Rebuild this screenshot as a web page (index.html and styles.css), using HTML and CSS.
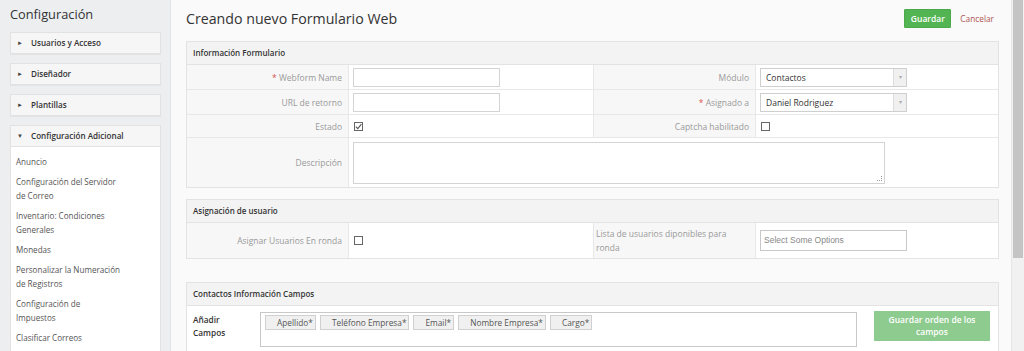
FILE: index.html
```html
<!DOCTYPE html>
<html lang="es">
<head>
    <meta charset="UTF-8">
    <title>Creando nuevo Formulario Web</title>
    <link rel="stylesheet" href="styles.css">
</head>
<body>
    <aside class="sidebar">
        <h1 class="side-title">Configuración</h1>
        <div class="acc-head"><span class="caret">&#9658;</span>Usuarios y Acceso</div>
        <div class="acc-head"><span class="caret">&#9658;</span>Diseñador</div>
        <div class="acc-head"><span class="caret">&#9658;</span>Plantillas</div>
        <div class="acc-head open"><span class="caret">&#9660;</span>Configuración Adicional</div>
        <ul class="acc-list">
            <li>Anuncio</li>
            <li>Configuración del Servidor de Correo</li>
            <li>Inventario: Condiciones Generales</li>
            <li>Monedas</li>
            <li>Personalizar la Numeración de Registros</li>
            <li>Configuración de Impuestos</li>
            <li>Clasificar Correos</li>
        </ul>
    </aside>

    <main class="main">
        <div class="page-head">
            <h2 class="page-title">Creando nuevo Formulario Web</h2>
            <div class="actions">
                <button class="btn-save">Guardar</button>
                <a class="cancel">Cancelar</a>
            </div>
        </div>

        <section class="block">
            <div class="block-head">Información Formulario</div>
            <div class="grid">
                <div class="lbl h25"><span class="req">*</span>&nbsp;Webform Name</div>
                <div class="val h25"><div class="input"></div></div>
                <div class="lbl h25">Módulo</div>
                <div class="val h25"><div class="select"><span>Contactos</span><i class="arrow">&#9662;</i></div></div>

                <div class="lbl h25">URL de retorno</div>
                <div class="val h25"><div class="input"></div></div>
                <div class="lbl h25"><span class="req">*</span>&nbsp;Asignado a</div>
                <div class="val h25"><div class="select"><span>Daniel Rodriguez</span><i class="arrow">&#9662;</i></div></div>

                <div class="lbl h23">Estado</div>
                <div class="val h23">
                    <span class="check">
                        <svg width="9" height="9" viewBox="0 0 9 9"><path d="M1.8 4.6 L3.8 6.6 L7.4 2.2" fill="none" stroke="#555" stroke-width="1.1"/></svg>
                    </span>
                </div>
                <div class="lbl h23">Captcha habilitado</div>
                <div class="val h23"><span class="check"></span></div>

                <div class="lbl h49 last">Descripción</div>
                <div class="val h49 wide last"><div class="textarea"><i class="grip"></i></div></div>
            </div>
        </section>

        <section class="block block-user">
            <div class="block-head">Asignación de usuario</div>
            <div class="grid">
                <div class="lbl h35 last">Asignar Usuarios En ronda</div>
                <div class="val h35 last"><span class="check"></span></div>
                <div class="lbl lbl-left h35 last">Lista de usuarios diponibles para ronda</div>
                <div class="val h35 last"><div class="input chosen">Select Some Options</div></div>
            </div>
        </section>

        <section class="block block-fields">
            <div class="block-head">Contactos Información Campos</div>
            <div class="fields-row">
                <div class="fields-label">Añadir Campos</div>
                <div class="fields-box">
                    <span class="chip">Apellido*</span>
                    <span class="chip">Teléfono Empresa*</span>
                    <span class="chip">Email*</span>
                    <span class="chip">Nombre Empresa*</span>
                    <span class="chip">Cargo*</span>
                </div>
                <button class="btn-order">Guardar orden de los campos</button>
            </div>
        </section>
    </main>

    <div class="scrollbar"><div class="thumb"></div></div>
</body>
</html>
```

FILE: styles.css
```css
body {
    margin: 0;
    display: flex;
    height: 351px;
    overflow: hidden;
    font-family: 'Open Sans', sans-serif;
    font-size: 8.5px;
    color: #333;
    background-color: #fafafa;
}
.sidebar {
    width: 151px;
    flex: none;
    padding: 0 9px 0 10px;
    background-color: #eceef0;
    border-right: 1px solid #e2e4e6;
}
.side-title {
    margin: 0;
    height: 32px;
    line-height: 28px;
    font-size: 12.8px;
    font-weight: 400;
    color: #333;
}
.acc-head {
    height: 20px;
    line-height: 20px;
    margin-bottom: 9px;
    background-color: #f6f6f6;
    border: 1px solid #e2e2e2;
    box-shadow: 0 1px 1px rgba(0, 0, 0, 0.04);
    font-weight: 600;
    font-size: 8.1px;
    color: #333;
}
.acc-head.open {
    margin-bottom: 0;
}
.caret {
    display: inline-block;
    width: 14px;
    padding-left: 6px;
    font-size: 6px;
    color: #444;
    vertical-align: top;
}
.acc-list {
    list-style: none;
    margin: 0;
    padding: 5px 0 0;
    height: 300px;
    background: #fff;
    border-left: 1px solid #e2e2e2;
    border-right: 1px solid #e2e2e2;
}
.acc-list li {
    padding: 3px 0 3px 5px;
    width: 105px;
    line-height: 14px;
    font-size: 8.1px;
    color: #555;
}
.main {
    flex: 1;
    padding: 0 0 0 15px;
    min-width: 0;
}
.page-head {
    display: flex;
    align-items: center;
    justify-content: space-between;
    height: 37px;
    padding-right: 17px;
    margin-bottom: 4px;
}
.page-title {
    margin: 0;
    font-size: 14.2px;
    font-weight: 400;
    color: #333;
}
.actions {
    display: flex;
    align-items: center;
    gap: 9px;
}
.btn-save {
    height: 19px;
    width: 47px;
    padding: 0;
    border: 1px solid #4aa94a;
    background-color: #52b452;
    color: #fff;
    font-family: 'Open Sans', sans-serif;
    font-size: 8.5px;
    font-weight: 600;
    border-radius: 1px;
}
.cancel {
    color: #b05454;
    font-size: 8.3px;
}
.block {
    width: 811px;
    border: 1px solid #e3e3e3;
    background: #fff;
    margin-bottom: 11px;
}
.block-user {
    margin-bottom: 23px;
}
.block-head {
    height: 22px;
    line-height: 22px;
    padding-left: 6px;
    background-color: #f3f3f3;
    border-bottom: 1px solid #e3e3e3;
    font-weight: 600;
    font-size: 8px;
    color: #333;
}
.grid {
    display: grid;
    grid-template-columns: 162px 245px 162px 1fr;
}
.lbl, .val {
    display: flex;
    align-items: center;
    border-bottom: 1px solid #e8e8e8;
    border-right: 1px solid #e8e8e8;
    box-sizing: border-box;
}
.val:nth-child(4n) {
    border-right: none;
}
.last {
    border-bottom: none;
}
.lbl {
    justify-content: flex-end;
    padding-right: 6px;
    background-color: #f7f7f7;
    color: #9a9a9a;
}
.lbl-left {
    justify-content: flex-start;
    padding: 0 8px 0 2px;
    line-height: 14px;
}
.val {
    padding-left: 4px;
}
.wide {
    grid-column: span 3;
    border-right: none;
}
.h25 { height: 25px; }
.h23 { height: 23px; }
.h49 { height: 49px; }
.h35 { height: 35px; }
.req {
    color: #d9534f;
}
.input {
    width: 147px;
    height: 19px;
    border: 1px solid #d4d4d4;
    background: #fff;
    box-sizing: border-box;
}
.input.chosen {
    font-family: 'Liberation Sans', Arial, sans-serif;
    font-size: 8.5px;
    color: #888;
    padding-left: 3px;
    height: 21px;
    line-height: 19px;
    border-color: #c8c8c8;
}
.select {
    display: flex;
    width: 147px;
    height: 19px;
    border: 1px solid #cfcfcf;
    box-sizing: border-box;
    background: #fff;
}
.select span {
    flex: 1;
    line-height: 17px;
    padding-left: 5px;
    color: #333;
}
.arrow {
    width: 12px;
    border-left: 1px solid #ddd;
    background: #f0f0f0;
    font-style: normal;
    font-size: 6px;
    color: #aaa;
    text-align: center;
    line-height: 17px;
}
.check {
    display: inline-block;
    width: 9px;
    height: 9px;
    border: 1px solid #666;
    box-sizing: border-box;
    margin-left: 1px;
    position: relative;
}
.check svg {
    position: absolute;
    left: -1px;
    top: -1px;
}
.textarea {
    width: 532px;
    height: 42px;
    border: 1px solid #d4d4d4;
    box-sizing: border-box;
    position: relative;
}
.grip {
    position: absolute;
    right: 2px;
    bottom: 2px;
    width: 4px;
    height: 4px;
    border-right: 1px dotted #999;
    border-bottom: 1px dotted #999;
}
.fields-row {
    display: flex;
    align-items: flex-start;
    padding: 6px 0 0 6px;
    height: 40px;
}
.fields-label {
    width: 50px;
    margin-top: 1px;
    margin-right: 17px;
    font-weight: 600;
    font-size: 8.3px;
    line-height: 13px;
    color: #333;
}
.fields-box {
    width: 597px;
    height: 35px;
    border: 1px solid #c8c8c8;
    box-sizing: border-box;
    padding: 2px 4px;
    display: flex;
    align-items: flex-start;
    gap: 4px;
}
.chip {
    height: 13px;
    line-height: 13px;
    padding: 0 2px 0 11px;
    border: 1px solid #d0d0d0;
    background-color: #f0f0f0;
    color: #555;
    font-size: 8.3px;
}
.btn-order {
    margin-left: 17px;
    margin-top: -1px;
    width: 116px;
    height: 30px;
    padding: 0 6px;
    border: none;
    background-color: #8ecb8e;
    color: #fff;
    font-family: 'Open Sans', sans-serif;
    font-size: 8.5px;
    font-weight: 600;
    line-height: 12px;
}
.scrollbar {
    width: 12px;
    flex: none;
    background: #f1f1f1;
    border-left: 1px solid #e6e6e6;
}
.thumb {
    margin: 0 1px;
    height: 258px;
    background: #c4c4c4;
}
```
